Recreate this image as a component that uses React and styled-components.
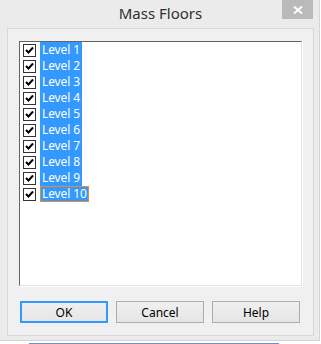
import styled, { createGlobalStyle } from "styled-components";

const Global = createGlobalStyle`
  html, body {
    margin: 0;
    padding: 0;
    background: #ffffff;
  }
  body {
    font-family: "Noto Sans", "Open Sans", sans-serif;
  }
`;

const Window = styled.div`
  width: 320px;
  height: 341px;
  background: #ebebeb;
  border-right: 1px solid #d4d4d4;
  border-bottom: 1px solid #d4d4d4;
  box-sizing: border-box;
  display: flex;
  flex-direction: column;
`;

const TitleBar = styled.div`
  height: 28px;
  display: grid;
  grid-template-columns: 1fr auto 1fr;
  align-items: start;
`;

const Title = styled.div`
  grid-column: 2;
  font-size: 15px;
  line-height: 26px;
  color: #2f2f2f;
  padding-left: 2px;
`;

const CloseButton = styled.div`
  grid-column: 3;
  justify-self: end;
  margin-right: 6px;
  width: 31px;
  height: 19px;
  background: #bababa;
  display: flex;
  align-items: center;
  justify-content: center;
`;

const Frame = styled.div`
  margin: 0 5px 0 7px;
  height: 308px;
  box-sizing: border-box;
  border: 1px solid #d7d7d7;
  background: #f0f0f0;
  padding: 12px 11px 0 11px;
  display: flex;
  flex-direction: column;
`;

const ListBox = styled.div`
  height: 245px;
  box-sizing: border-box;
  background: #ffffff;
  border-top: 1px solid #646464;
  border-left: 1px solid #646464;
  border-right: 1px solid #e3e3e3;
  border-bottom: 1px solid #e3e3e3;
  box-shadow: inset -1px -1px 0 #ffffff, 1px 1px 0 #ffffff;
  padding: 0 0 0 3px;
`;

const Row = styled.div`
  height: 16px;
  display: flex;
  align-items: center;
`;

const Box = styled.div`
  width: 13px;
  height: 13px;
  box-sizing: border-box;
  border: 1px solid #333333;
  background: #ffffff;
  display: flex;
  align-items: center;
  justify-content: center;
  margin-right: 4px;
`;

const Label = styled.div`
  height: 16px;
  box-sizing: border-box;
  font-size: 12px;
  letter-spacing: -0.1px;
  line-height: 16px;
  padding: 0 2px;
  background: #3399ff;
  color: #ffffff;
  box-shadow: ${(p) => (p.$focus ? "inset 0 0 0 1px #e98a2c" : "none")};
`;

const Buttons = styled.div`
  display: flex;
  gap: 8px;
  margin-top: 15px;
  padding-left: 1px;
`;

const Button = styled.div`
  width: 88px;
  height: 22px;
  box-sizing: border-box;
  border: 1px solid ${(p) => (p.$default ? "#3399ff" : "#adadad")};
  box-shadow: ${(p) => (p.$default ? "inset 0 0 0 1px #3399ff" : "none")};
  background: linear-gradient(#f0f0f0, #e5e5e5);
  font-size: 12px;
  color: #000000;
  display: flex;
  align-items: center;
  justify-content: center;
`;

const BackStrip = styled.div`
  height: 3px;
  display: flex;
  align-items: end;
  padding-left: 29px;
`;

const BackLine = styled.div`
  width: 250px;
  height: 1px;
  background: #6f90c8;
`;

const Check = () => (
  <svg width="9" height="9" viewBox="0 0 9 9">
    <path d="M1 4 L3.5 6.5 L8 1.5" stroke="#000" strokeWidth="2" fill="none" />
  </svg>
);

const levels = Array.from({ length: 10 }, (_, i) => `Level ${i + 1}`);

export default function App() {
  return (
    <>
      <Global />
      <Window>
        <TitleBar>
          <Title>Mass Floors</Title>
          <CloseButton>
            <svg width="10" height="8" viewBox="0 0 10 8">
              <path d="M1 0.5 L9 7.5 M9 0.5 L1 7.5" stroke="#fff" strokeWidth="2" />
            </svg>
          </CloseButton>
        </TitleBar>
        <Frame>
          <ListBox>
            {levels.map((name, i) => (
              <Row key={name}>
                <Box>
                  <Check />
                </Box>
                <Label $focus={i === levels.length - 1}>{name}</Label>
              </Row>
            ))}
          </ListBox>
          <Buttons>
            <Button $default>OK</Button>
            <Button>Cancel</Button>
            <Button>Help</Button>
          </Buttons>
        </Frame>
      </Window>
      <BackStrip>
        <BackLine />
      </BackStrip>
    </>
  );
}
